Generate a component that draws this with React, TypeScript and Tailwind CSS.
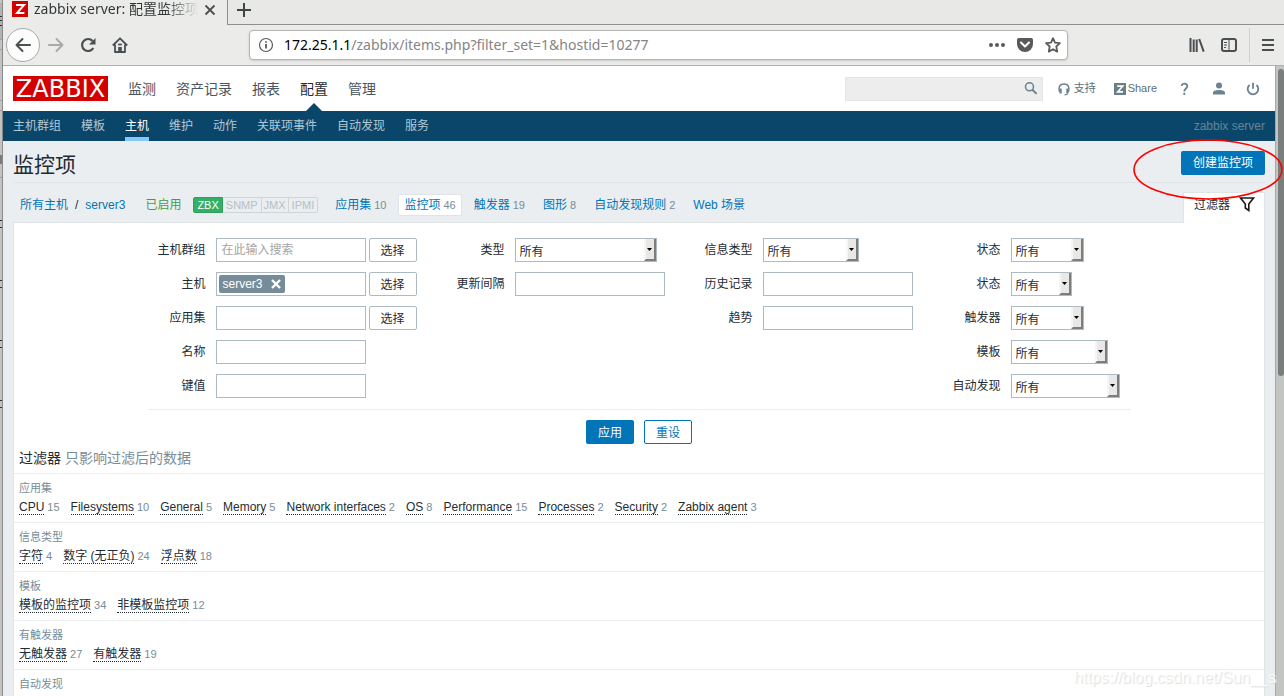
import { ReactNode } from "react"

type Count = { name: string; count: number }

const mainMenu = ["监测", "资产记录", "报表", "配置", "管理"]
const subMenu = ["主机群组", "模板", "主机", "维护", "动作", "关联项事件", "自动发现", "服务"]

const subfilters: { title: string; items: Count[] }[] = [
  {
    title: "应用集",
    items: [
      { name: "CPU", count: 15 },
      { name: "Filesystems", count: 10 },
      { name: "General", count: 5 },
      { name: "Memory", count: 5 },
      { name: "Network interfaces", count: 2 },
      { name: "OS", count: 8 },
      { name: "Performance", count: 15 },
      { name: "Processes", count: 2 },
      { name: "Security", count: 2 },
      { name: "Zabbix agent", count: 3 },
    ],
  },
  {
    title: "信息类型",
    items: [
      { name: "字符", count: 4 },
      { name: "数字 (无正负)", count: 24 },
      { name: "浮点数", count: 18 },
    ],
  },
  {
    title: "模板",
    items: [
      { name: "模板的监控项", count: 34 },
      { name: "非模板监控项", count: 12 },
    ],
  },
  {
    title: "有触发器",
    items: [
      { name: "无触发器", count: 27 },
      { name: "有触发器", count: 19 },
    ],
  },
  { title: "自动发现", items: [] },
]

function TabStrip() {
  return (
    <div className="flex h-[25px] shrink-0 text-[#2e3436]">
      <div className="flex w-[225px] items-start gap-1.5 border-r border-[#8f8f8f] bg-[#ebebe9] pl-[9px]">
        <svg className="mt-px h-4 w-4 shrink-0" viewBox="0 0 16 16">
          <rect width="16" height="16" fill="#d40000" />
          <path d="M4 3.9h8L5 12h7.4" fill="none" stroke="#fff" strokeWidth="2" />
        </svg>
        <div className="w-[164px] overflow-hidden whitespace-nowrap bg-gradient-to-r from-[#2e3436] from-80% to-transparent bg-clip-text text-sm leading-[18px] text-transparent">
          zabbix server: 配置监控项
        </div>
        <button aria-label="Close tab" className="mt-1 h-3 w-3 shrink-0">
          <svg viewBox="0 0 12 12" fill="none" stroke="#4a4f51" strokeWidth="1.8">
            <path d="M1.5 1.5l9 9M10.5 1.5l-9 9" />
          </svg>
        </button>
      </div>
      <div className="flex-1 border-b border-[#8f8f8f] bg-[#e8e8e6] pl-2">
        <button aria-label="New tab" className="h-4 w-4">
          <svg viewBox="0 0 16 16" fill="none" stroke="#3f4446" strokeWidth="2">
            <path d="M8 1v14M1 8h14" />
          </svg>
        </button>
      </div>
    </div>
  )
}

function Toolbar() {
  return (
    <div className="flex h-[41px] shrink-0 items-center border-b border-[#b0b0ae] bg-[#ebebe9] pl-[3px] pr-2 text-[#4a4f51]">
      <button aria-label="Back" className="flex h-[34px] w-[34px] items-center justify-center rounded-full border border-[#a9a9a7] bg-[#fcfcfc]">
        <svg className="h-4 w-4" viewBox="0 0 16 16" fill="none" stroke="currentColor" strokeWidth="2" strokeLinecap="round" strokeLinejoin="round">
          <path d="M15 8H1.5M7.5 2l-6 6 6 6" />
        </svg>
      </button>
      <button aria-label="Forward" className="ml-2 text-[#a9a9a7]">
        <svg className="h-4 w-4" viewBox="0 0 16 16" fill="none" stroke="currentColor" strokeWidth="2" strokeLinecap="round" strokeLinejoin="round">
          <path d="M1 8h13.5M8.5 2l6 6-6 6" />
        </svg>
      </button>
      <button aria-label="Reload" className="ml-4">
        <svg className="h-4 w-4" viewBox="0 0 16 16" fill="none" stroke="currentColor" strokeWidth="2.2">
          <path d="M13.3 11A6 6 0 1 1 12.6 4" />
          <path d="M15.5 1v6.5H9z" fill="currentColor" stroke="none" />
        </svg>
      </button>
      <button aria-label="Home" className="ml-4">
        <svg className="h-4 w-4" viewBox="0 0 16 16" fill="none" stroke="currentColor" strokeWidth="1.8" strokeLinejoin="round">
          <path d="M.8 8.5L8 1.3l7.2 7.2M3 7.5V15h10V7.5" />
          <path d="M6.2 15v-5h3.6v5z" fill="currentColor" stroke="none" />
          <path d="M6.2 7.5h3.6" />
        </svg>
      </button>
      <div className="ml-[121px] flex h-[30px] w-full max-w-[819px] items-center rounded border border-[#b4b4b2] bg-white px-2 shadow-sm">
        <svg className="mr-2.5 h-4 w-4 shrink-0" viewBox="0 0 16 16" fill="none" stroke="#5a5a5a" strokeWidth="1.2">
          <circle cx="8" cy="8" r="6.5" />
          <path d="M8 7v4.5M8 4.2v1.6" strokeWidth="1.8" />
        </svg>
        <div className="flex-1 whitespace-nowrap text-sm text-[#858585]">
          <span className="text-black">172.25.1.1</span>/zabbix/items.php?filter_set=1&amp;hostid=10277
        </div>
        <div className="flex items-center gap-3 text-[#5a5a5a]">
          <svg className="h-4 w-4" viewBox="0 0 16 16" fill="currentColor">
            <circle cx="2" cy="8" r="2" />
            <circle cx="8" cy="8" r="2" />
            <circle cx="14" cy="8" r="2" />
          </svg>
          <svg className="h-4 w-4" viewBox="0 0 16 16">
            <path d="M1.8 1h12.4Q16 1 16 2.8V7a8 8 0 0 1-16 0V2.8Q0 1 1.8 1z" fill="currentColor" />
            <path d="M4 5.5l4 4 4-4" fill="none" stroke="#fff" strokeWidth="2" strokeLinecap="round" strokeLinejoin="round" />
          </svg>
          <svg className="-mr-0.5 h-4 w-4" viewBox="0 0 16 16" fill="none" stroke="currentColor" strokeWidth="1.8" strokeLinejoin="round">
            <path d="M8 1.2l2 4.4 4.900.6-3.600 3.300.9 5.100L8 12.200l-4.200 2.400.9-5.100L1.100 6.200 6 5.600z" />
          </svg>
        </div>
      </div>
      <div className="ml-auto flex shrink-0 items-center gap-4">
        <svg className="h-4 w-4" viewBox="0 0 16 16" fill="none" stroke="currentColor" strokeWidth="2">
          <path d="M1.500 1v14M4.700 2.500V15M7.700 2.500V15M10.200 2l4.500 12.700" />
        </svg>
        <svg className="h-4 w-4" viewBox="0 0 16 16" fill="none" stroke="currentColor" strokeWidth="2">
          <rect x="1" y="2" width="14" height="12" rx="2" />
          <path d="M8 2v12M3 5.500h3M3 8h3M3 10.500h2" strokeWidth="1" />
        </svg>
        <div className="-mx-1 h-[34px] w-px bg-[#d0d0ce]" />
        <svg className="-ml-0.5 h-4 w-4" viewBox="0 0 16 16" fill="none" stroke="currentColor" strokeWidth="2">
          <path d="M2 3h12M2 8h12M2 13h12" />
        </svg>
      </div>
    </div>
  )
}

function Header() {
  return (
    <header className="flex h-[45px] shrink-0 items-center bg-white px-2.5 text-[#6b8291]">
      <a href="#" className="flex h-[25px] w-[95px] items-center justify-center bg-[#d40000] font-['DejaVu_Sans'] text-2xl leading-none text-white">
        ZABBIX
      </a>
      <nav className="ml-5 flex h-full gap-5 text-sm">
        {mainMenu.map((item) => (
          <a
            key={item}
            href="#"
            className={item === "配置" ? "relative flex items-center text-[#1f2c33]" : "flex items-center text-[#4a5660]"}
          >
            {item}
            {item === "配置" && (
              <svg className="absolute bottom-0 left-1.5 h-2 w-4" viewBox="0 0 16 8">
                <path d="M0 8l8-8 8 8z" fill="#0a466a" />
              </svg>
            )}
          </a>
        ))}
      </nav>
      <div className="ml-auto flex items-center text-[11px]">
        <div className="flex h-6 w-[198px] items-center border border-[#e2e5e7] bg-[#ededed] pr-[3px]">
          <input aria-label="搜索" className="min-w-0 flex-1 bg-transparent px-1 outline-none" />
          <svg className="h-4 w-4" viewBox="0 0 16 16" fill="none" stroke="currentColor">
            <circle cx="6.500" cy="5.800" r="4" strokeWidth="1.600" />
            <path d="M9.400 8.700l4.200 4.200" strokeWidth="2" />
          </svg>
        </div>
        <a href="#" className="ml-3.5 flex items-center gap-[3px]">
          <svg className="h-3.5 w-3.5" viewBox="0 0 14 14" fill="none" stroke="currentColor" strokeWidth="1.500">
            <path d="M3.500 10C1.800 9.300 1.900 7 2.300 5.200 2.900 3 4.800 2 7 2s4.100 1 4.700 3.200c.4 1.800.5 4.100-1.200 4.800" />
            <path d="M3.700 6.500v5M10.300 6.500v5" strokeWidth="2" />
            <path d="M11 11.500q-1 1.300-3.500 1.300" strokeWidth="1.200" />
          </svg>
          <span className="text-[#5b6f7a]">支持</span>
        </a>
        <a href="#" className="ml-[18px] flex items-center gap-0.5">
          <svg className="h-3 w-3" viewBox="0 0 12 12">
            <rect width="12" height="12" fill="#6b7f8b" />
            <path d="M3.200 3.200h5.400L3.800 8.800h5.200" fill="none" stroke="#fff" strokeWidth="1.700" />
          </svg>
          <span className="text-[#5b6f7a]">Share</span>
        </a>
        <a href="#" aria-label="帮助" className="ml-[19px]">
          <svg className="h-4 w-4" viewBox="0 0 16 16" fill="none" stroke="currentColor" strokeWidth="1.800">
            <path d="M5.700 5c0-3.300 5.600-3.300 5.600.2 0 2.300-3 2.300-3 5.200M8.300 11.800v2.200" />
          </svg>
        </a>
        <a href="#" aria-label="用户" className="ml-[19px]">
          <svg className="h-4 w-4" viewBox="0 0 16 16" fill="currentColor">
            <circle cx="8" cy="4.500" r="3" />
            <path d="M2 13.500v-1.800q0-2.700 6-2.700t6 2.700v1.800z" />
          </svg>
        </a>
        <a href="#" aria-label="退出" className="ml-[18px] mr-1">
          <svg className="h-4 w-4" viewBox="0 0 16 16" fill="none" stroke="currentColor" strokeWidth="1.800">
            <path d="M4.500 4a5.300 5.300 0 1 0 7 0M8 1.800v6" />
          </svg>
        </a>
      </div>
    </header>
  )
}

function SubNav() {
  return (
    <nav className="flex h-[30px] shrink-0 gap-5 bg-[#0a466a] px-2.5 text-xs text-[#b4c8d4]">
      {subMenu.map((item) => (
        <a
          key={item}
          href="#"
          className={
            item === "主机"
              ? "flex items-center border-b-4 border-[#82c8fa] pt-1 text-white"
              : "flex items-center"
          }
        >
          {item}
        </a>
      ))}
      <span className="ml-auto flex items-center text-[#668497]">zabbix server</span>
    </nav>
  )
}

function ObjectLink({ name, count, active }: { name: string; count?: number; active?: boolean }) {
  return (
    <a
      href="#"
      className={
        active
          ? "flex h-[22px] items-center gap-[3px] rounded-xs border border-[#dfe4e7] bg-white px-[5px] text-[#0275b8]"
          : "flex h-[22px] items-center gap-[3px] px-1.5 text-[#0275b8]"
      }
    >
      {name}
      {count !== undefined && <span className="text-[11px] text-[#768d99]">{count}</span>}
    </a>
  )
}

function ObjectNav() {
  return (
    <div className="flex items-start border-t border-[#dfe4e7]">
      <div className="flex h-[39px] items-center pb-px pt-1.5 text-xs text-[#0275b8]">
        <a href="#" className="ml-[7px]">所有主机</a>
        <span className="mx-[7px] text-[#1f2c33]">/</span>
        <a href="#">server3</a>
        <span className="ml-5 text-[#429e47]">已启用</span>
        <div className="ml-3 flex h-4 text-[11px] leading-[14px] text-[#b5bfc5]">
          <span className="rounded-l-xs border border-[#2f9f5e] bg-[#34af67] px-[3px] text-white">ZBX</span>
          <span className="border border-l-0 border-[#ced4d8] px-[3px]">SNMP</span>
          <span className="border border-l-0 border-[#ced4d8] px-0.5">JMX</span>
          <span className="rounded-r-xs border border-l-0 border-[#ced4d8] px-[3px]">IPMI</span>
        </div>
        <div className="ml-[11px] flex gap-1.5">
          <ObjectLink name="应用集" count={10} />
          <ObjectLink name="监控项" count={46} active />
          <ObjectLink name="触发器" count={19} />
          <ObjectLink name="图形" count={8} />
          <ObjectLink name="自动发现规则" count={2} />
          <ObjectLink name="Web 场景" />
        </div>
      </div>
      <a
        href="#"
        className="z-10 -mb-px ml-auto mt-[9px] flex h-[31px] w-[82px] items-start gap-[9px] border border-b-0 border-[#dfe4e7] bg-white pl-2.5 pt-0.5 text-xs leading-5 text-[#1f2c33]"
      >
        过滤器
        <svg className="mt-px h-4 w-4" viewBox="0 0 16 16" fill="none" stroke="#1a1a1a" strokeWidth="1.600">
          <path d="M1.500 2h13L9.800 8v6.500L6.300 12V8z" />
        </svg>
      </a>
    </div>
  )
}

function Field({ id, label, narrow, children }: { id: string; label: string; narrow?: boolean; children: ReactNode }) {
  return (
    <div className="flex h-6 items-center gap-2.5">
      <label htmlFor={id} className={narrow ? "w-[58px] shrink-0 text-right" : "w-[88px] shrink-0 text-right"}>
        {label}
      </label>
      <div className="flex gap-[3px]">{children}</div>
    </div>
  )
}

function TextBox({ id, placeholder }: { id: string; placeholder?: string }) {
  return (
    <input
      id={id}
      placeholder={placeholder}
      className="h-6 w-[150px] border border-[#acbbc2] bg-white px-[5px] outline-none placeholder:text-[#a5a5a5]"
    />
  )
}

function SelectButton() {
  return (
    <button type="button" className="h-6 w-12 rounded-xs border border-[#acbbc2] bg-white pt-px">选择</button>
  )
}

function DropDown({ id, width }: { id: string; width: string }) {
  return (
    <div className={`relative h-6 ${width}`}>
      <select id={id} className="h-full w-full appearance-none border border-[#acbbc2] bg-white pl-1 pt-1 outline-none">
        <option>所有</option>
      </select>
      <span className="pointer-events-none absolute right-px top-px flex h-[22px] w-3 items-center justify-center border-b-2 border-l-2 border-r-2 border-b-[#7d7d7d] border-l-[#f6f6f6] border-r-[#7d7d7d] bg-[#e8e8e6]">
        <svg className="h-[3px] w-[5px]" viewBox="0 0 5 3">
          <path d="M0 0h5L2.500 3z" fill="#000" />
        </svg>
      </span>
    </div>
  )
}

function FilterForm() {
  return (
    <form className="flex flex-col items-center pt-[15px] text-xs text-[#1f2c33]">
      <div className="flex w-[983px] border-b border-[#ebeef0] pb-[11px]">
        <div className="flex flex-col gap-2.5">
          <Field id="groups" label="主机群组" narrow>
            <TextBox id="groups" placeholder="在此输入搜索" />
            <SelectButton />
          </Field>
          <Field id="hosts" label="主机" narrow>
            <div className="flex h-6 w-[150px] items-center border border-[#acbbc2] bg-white pl-0.5">
              <span className="flex h-[18px] items-center gap-2 rounded-xs bg-[#768d99] px-1 text-white">
                server3
                <button type="button" aria-label="移除">
                  <svg className="h-2.5 w-2.5" viewBox="0 0 10 10" stroke="#fff" strokeWidth="2.400">
                    <path d="M1 1l8 8M9 1l-8 8" />
                  </svg>
                </button>
              </span>
              <input id="hosts" className="min-w-0 flex-1 bg-transparent outline-none" />
            </div>
            <SelectButton />
          </Field>
          <Field id="application" label="应用集" narrow>
            <TextBox id="application" />
            <SelectButton />
          </Field>
          <Field id="name" label="名称" narrow>
            <TextBox id="name" />
          </Field>
          <Field id="key" label="键值" narrow>
            <TextBox id="key" />
          </Field>
        </div>
        <div className="flex flex-col gap-2.5">
          <Field id="type" label="类型">
            <DropDown id="type" width="w-[142px]" />
          </Field>
          <Field id="delay" label="更新间隔">
            <TextBox id="delay" />
          </Field>
        </div>
        <div className="flex flex-col gap-2.5">
          <Field id="value_type" label="信息类型">
            <DropDown id="value_type" width="w-24" />
          </Field>
          <Field id="history" label="历史记录">
            <TextBox id="history" />
          </Field>
          <Field id="trends" label="趋势">
            <TextBox id="trends" />
          </Field>
        </div>
        <div className="flex flex-col gap-2.5">
          <Field id="state" label="状态">
            <DropDown id="state" width="w-[73px]" />
          </Field>
          <Field id="status" label="状态">
            <DropDown id="status" width="w-[61px]" />
          </Field>
          <Field id="with_triggers" label="触发器">
            <DropDown id="with_triggers" width="w-[73px]" />
          </Field>
          <Field id="templated" label="模板">
            <DropDown id="templated" width="w-[97px]" />
          </Field>
          <Field id="discovery" label="自动发现">
            <DropDown id="discovery" width="w-[109px]" />
          </Field>
        </div>
      </div>
      <div className="mt-2.5 flex gap-2.5">
        <button type="button" className="h-6 w-12 rounded-xs bg-[#0275b8] pt-px text-white">应用</button>
        <button type="button" className="h-6 w-12 rounded-xs border border-[#0275b8] bg-white pt-px text-[#0275b8]">重设</button>
      </div>
    </form>
  )
}

function Subfilters() {
  return (
    <div>
      <h4 className="flex h-[29px] items-center gap-1 pb-0.5 pl-[5px] text-sm text-[#1f2c33]">
        过滤器 <span className="text-[#768d99]">只影响过滤后的数据</span>
      </h4>
      {subfilters.map((group) => (
        <div key={group.title} className="h-[49px] border-t border-[#ebeef0] pl-[5px] pt-1.5">
          <h3 className="text-[11px] leading-4 text-[#768d99]">{group.title}</h3>
          <div className="flex gap-[11px] pt-1 text-xs leading-[14px]">
            {group.items.map((item) => (
              <span key={item.name} className="flex items-start gap-[3px]">
                <a href="#" className="border-b border-dotted border-[#1f2c33] text-[#1f2c33]">{item.name}</a>
                <span className="text-[11px] text-[#768d99]">{item.count}</span>
              </span>
            ))}
          </div>
        </div>
      ))}
    </div>
  )
}

// sliver of the desktop window that sits behind the browser
function WindowBehind() {
  return (
    <div className="w-[3px] shrink-0 border-r border-[#8a8a8a] bg-[#c3c3c3]">
      <svg className="h-[420px] w-0.5" viewBox="0 0 2 420">
        <path d="M0 3h2v36H0z" fill="#b2b2b2" />
        <path d="M0 39.500h2M0 49.500h2M0 100.500h2M0 110.500h2M0 177.500h2" stroke="#a0a0a0" />
        <path d="M0 16.500h2M0 20.500h2M0 25.500h2M1 155v9M0 220.500h2M0 227.500h2M0 280.500h2M0 287.500h2M0 340.500h2M0 347.500h2M0 400.500h2M0 407.500h2" stroke="#333" />
      </svg>
    </div>
  )
}

export default function App() {
  return (
    <div className="flex h-screen overflow-hidden bg-[#c0c0c0] font-['Noto_Sans','Noto_Sans_CJK_SC',sans-serif]">
      <WindowBehind />
      <div className="relative flex min-w-0 flex-1 flex-col">
        <TabStrip />
        <Toolbar />
        <div className="flex min-h-0 flex-1 font-['Liberation_Sans','Noto_Sans_CJK_SC',sans-serif]">
          <div className="flex min-w-0 flex-1 flex-col overflow-hidden bg-[#ebeef0]">
            <Header />
            <SubNav />
            <main className="px-2.5">
              <div className="flex h-[41px] items-start justify-between pt-2.5">
                <h1 className="text-[21px] leading-7 text-[#1f2c33]">监控项</h1>
                <button className="h-6 rounded-xs bg-[#0275b8] px-3 text-xs text-white">创建监控项</button>
              </div>
              <ObjectNav />
              <div className="border border-[#dfe4e7] bg-white">
                <FilterForm />
                <Subfilters />
              </div>
            </main>
          </div>
          <div className="w-[9px] shrink-0 border-l border-[#a8a8a8] bg-[#c3c5c2] pl-0.5 pt-[3px]">
            <div className="h-[49%] rounded-full bg-[#7a7e7d]" />
          </div>
        </div>
        <svg className="pointer-events-none absolute right-px top-[139px] z-20 h-[61px] w-[150px]" viewBox="0 0 150 61">
          <ellipse cx="75" cy="30.500" rx="74" ry="29.500" fill="none" stroke="#f00" strokeWidth="1.600" />
        </svg>
        <div className="pointer-events-none absolute bottom-1.5 right-2 z-20 font-['Liberation_Sans'] text-base text-white/80 [text-shadow:1px_1px_1px_#dcdcdc]">
          https://blog.csdn.net/Sun__s
        </div>
      </div>
    </div>
  )
}
